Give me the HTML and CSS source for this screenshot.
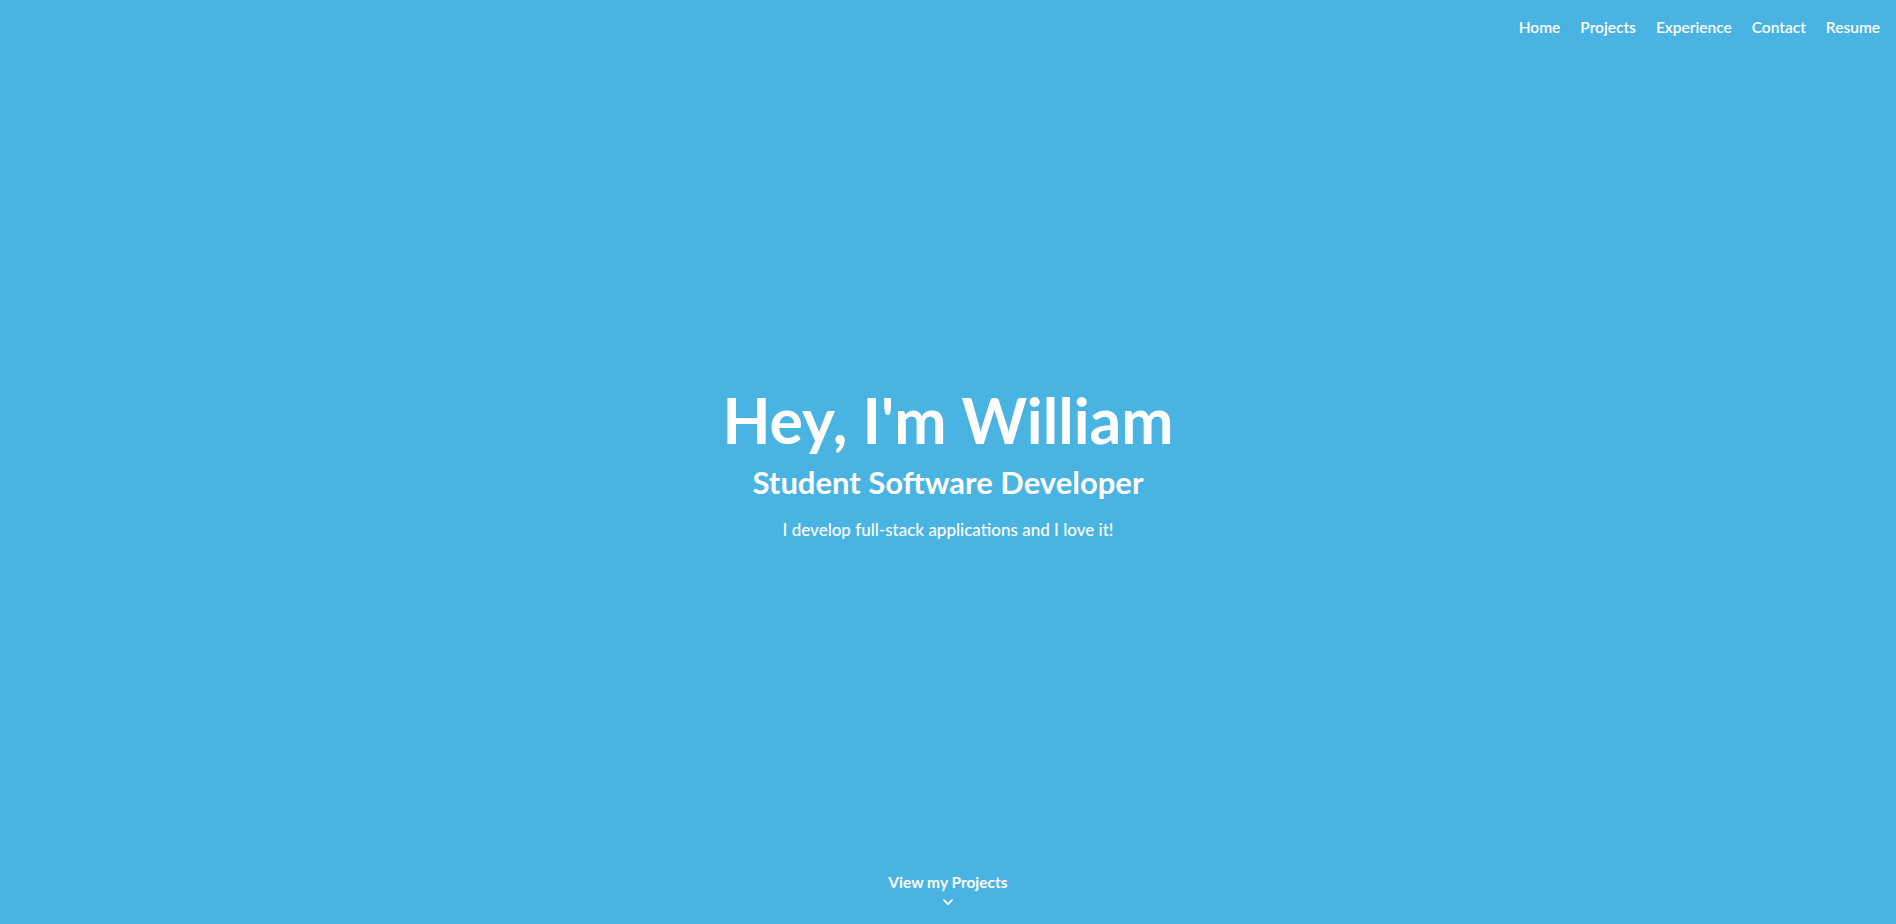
FILE: index.html
```html
<!DOCTYPE html>
<html lang="en">
<head>
<meta charset="utf-8">
<title>William</title>
<link rel="stylesheet" href="styles.css">
</head>
<body>
<section class="hero">
  <nav class="nav">
    <a href="#">Home</a>
    <a href="#">Projects</a>
    <a href="#">Experience</a>
    <a href="#">Contact</a>
    <a href="#">Resume</a>
  </nav>
  <div class="intro">
    <h1 class="title">Hey, I'm William</h1>
    <h2 class="subtitle">Student Software Developer</h2>
    <p class="tagline">I develop full-stack applications and I love it!</p>
  </div>
  <a class="more" href="#">
    <span>View my Projects</span>
    <svg class="chev" width="10" height="7" viewBox="0 0 10 7"><path d="M1 1.2 L5 5.2 L9 1.2" fill="none" stroke="#fff" stroke-width="1.8" stroke-linecap="round" stroke-linejoin="round"/></svg>
  </a>
</section>
</body>
</html>
```
FILE: styles.css
```css
* { box-sizing: border-box; }
html, body { margin: 0; padding: 0; }
body {
  font-family: "Lato", "Open Sans", sans-serif;
  color: #fff;
  background: #49b4e1;
}
.hero {
  height: 100vh;
  display: flex;
  flex-direction: column;
  align-items: center;
  background: #49b4e1;
}
.nav {
  align-self: stretch;
  display: flex;
  justify-content: flex-end;
  gap: 20px;
  padding: 18px 16px 0 0;
}
.nav a {
  color: #fff;
  text-decoration: none;
  font-size: 15.5px;
  font-weight: 600;
}
.intro {
  flex: 1;
  display: flex;
  flex-direction: column;
  align-items: center;
  justify-content: center;
  text-align: center;
  padding-top: 17px;
}
.title {
  margin: 0 0 9px;
  font-size: 62.5px;
  font-weight: 700;
  line-height: 1.1;
}
.subtitle {
  margin: 0;
  font-size: 31px;
  font-weight: 700;
  line-height: 1.2;
}
.tagline {
  margin: 18px 0 0;
  font-size: 17px;
  font-weight: 500;
}
.more {
  display: flex;
  flex-direction: column;
  align-items: center;
  color: #fff;
  text-decoration: none;
  font-size: 15.5px;
  font-weight: 700;
  padding-bottom: 18px;
}
.chev { margin-top: 8px; }
```
